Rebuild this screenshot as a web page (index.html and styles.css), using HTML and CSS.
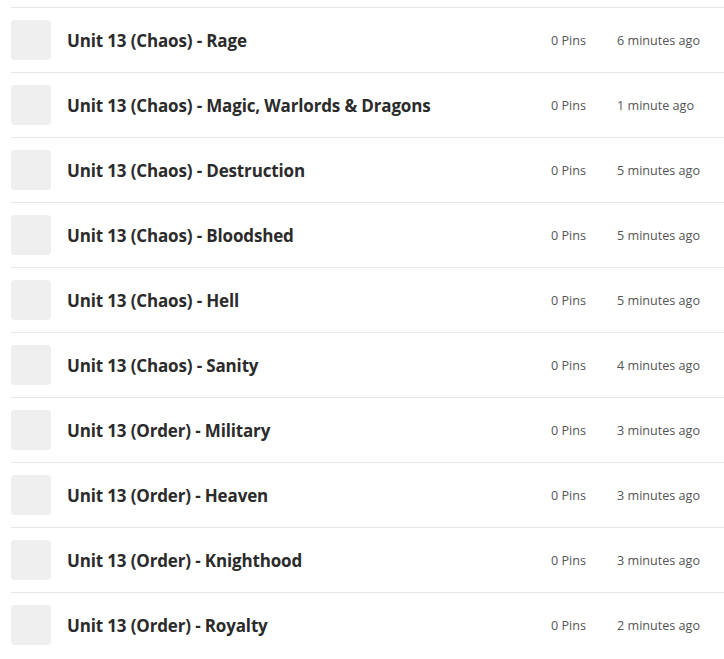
FILE: index.html
```html
<!DOCTYPE html>
<html>
<head>
<meta charset="utf-8">
<link rel="stylesheet" href="styles.css">
</head>
<body>
<ul class="list">
  <li class="row"><div class="thumb"></div><div class="title">Unit 13 (Chaos) - Rage</div><div class="pins">0 Pins</div><div class="time">6 minutes ago</div></li>
  <li class="row"><div class="thumb"></div><div class="title">Unit 13 (Chaos) - Magic, Warlords &amp; Dragons</div><div class="pins">0 Pins</div><div class="time">1 minute ago</div></li>
  <li class="row"><div class="thumb"></div><div class="title">Unit 13 (Chaos) - Destruction</div><div class="pins">0 Pins</div><div class="time">5 minutes ago</div></li>
  <li class="row"><div class="thumb"></div><div class="title">Unit 13 (Chaos) - Bloodshed</div><div class="pins">0 Pins</div><div class="time">5 minutes ago</div></li>
  <li class="row"><div class="thumb"></div><div class="title">Unit 13 (Chaos) - Hell</div><div class="pins">0 Pins</div><div class="time">5 minutes ago</div></li>
  <li class="row"><div class="thumb"></div><div class="title">Unit 13 (Chaos) - Sanity</div><div class="pins">0 Pins</div><div class="time">4 minutes ago</div></li>
  <li class="row"><div class="thumb"></div><div class="title">Unit 13 (Order) - Military</div><div class="pins">0 Pins</div><div class="time">3 minutes ago</div></li>
  <li class="row"><div class="thumb"></div><div class="title">Unit 13 (Order) - Heaven</div><div class="pins">0 Pins</div><div class="time">3 minutes ago</div></li>
  <li class="row"><div class="thumb"></div><div class="title">Unit 13 (Order) - Knighthood</div><div class="pins">0 Pins</div><div class="time">3 minutes ago</div></li>
  <li class="row"><div class="thumb"></div><div class="title">Unit 13 (Order) - Royalty</div><div class="pins">0 Pins</div><div class="time">2 minutes ago</div></li>
</ul>
</body>
</html>
```

FILE: styles.css
```css
html, body {
  margin: 0;
  padding: 0;
  background: #fff;
}
body {
  font-family: "Open Sans", "Noto Sans", sans-serif;
  color: #333;
  overflow: hidden;
}
.list {
  list-style: none;
  margin: 7px 0 0 11px;
  padding: 0;
}
.row {
  display: grid;
  grid-template-columns: 40px 1fr 66px 107px;
  align-items: center;
  border-top: 1px solid #e8e8e8;
  padding: 12px 0;
}
.thumb {
  width: 40px;
  height: 40px;
  border-radius: 4px;
  background: #efefef;
}
.title {
  padding-left: 16px;
  font-size: 17px;
  font-weight: 700;
  color: #2b2b2b;
  letter-spacing: -0.15px;
}
.pins, .time {
  font-size: 12.6px;
  color: #555;
}
```
